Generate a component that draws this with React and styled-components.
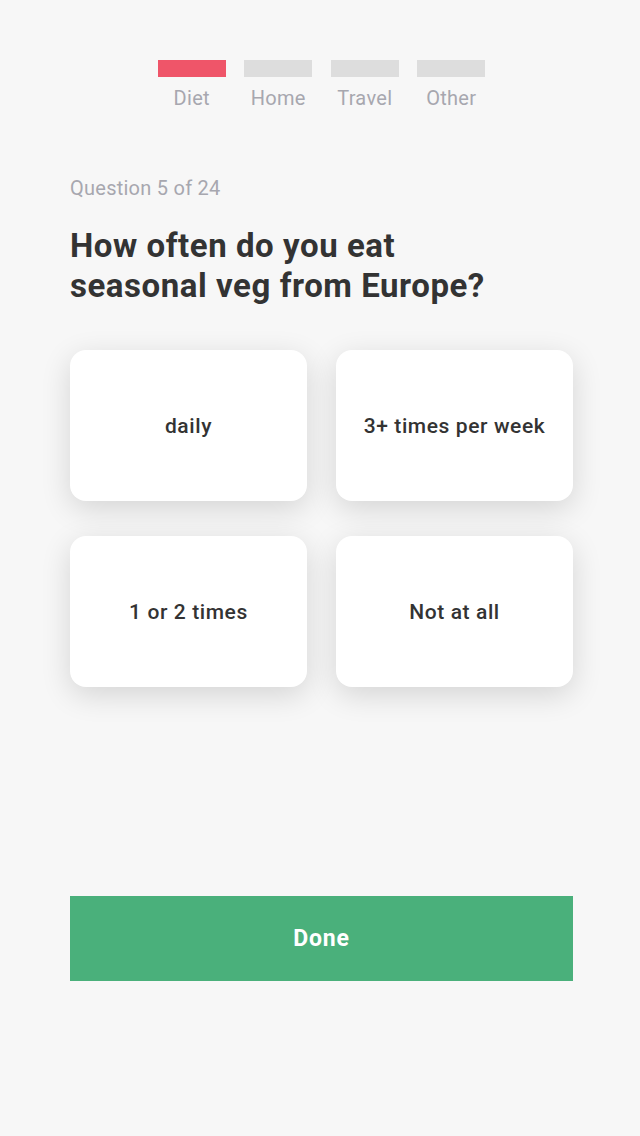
import React from 'react'
import styled, { createGlobalStyle } from 'styled-components'

const GlobalStyle = createGlobalStyle`
  html, body {
    margin: 0;
    padding: 0;
    background: #f7f7f7;
  }
  body {
    font-family: Roboto, "Noto Sans", Arial, sans-serif;
  }
`

const Page = styled.div`
  min-height: 1136px;
  box-sizing: border-box;
  padding: 60px 67px 0 70px;
  background: #f7f7f7;
`

const Steps = styled.div`
  display: flex;
  justify-content: center;
  gap: 18.5px;
`

const Step = styled.div`
  width: 68px;
  display: flex;
  flex-direction: column;
  align-items: center;
`

const StepBar = styled.div`
  width: 100%;
  height: 17px;
  background: ${p => (p.active ? '#ef5569' : '#dddddd')};
`

const StepLabel = styled.span`
  margin-top: 9px;
  font-size: 20px;
  line-height: 24px;
  letter-spacing: 0.3px;
  color: #a7a7af;
  white-space: nowrap;
`

const Counter = styled.div`
  margin-top: 66px;
  font-size: 20px;
  line-height: 24px;
  letter-spacing: 0.25px;
  color: #a7a7af;
`

const Question = styled.h1`
  margin: 26px 0 0;
  font-size: 33px;
  line-height: 40px;
  letter-spacing: 0.55px;
  font-weight: 700;
  color: #333333;
`

const Options = styled.div`
  margin-top: 44px;
  display: grid;
  grid-template-columns: 237px 237px;
  column-gap: 29px;
  row-gap: 35px;
`

const Option = styled.button`
  height: 151px;
  border: none;
  border-radius: 16px;
  background: #ffffff;
  box-shadow: 0 8px 30px rgba(0, 0, 0, 0.14);
  font-family: inherit;
  font-size: 21px;
  letter-spacing: 0.6px;
  font-weight: 500;
  color: #333333;
  cursor: pointer;
`

const DoneButton = styled.button`
  display: block;
  width: 503px;
  height: 85px;
  margin-top: 209px;
  border: none;
  background: #4ab07b;
  color: #ffffff;
  font-family: inherit;
  font-size: 23px;
  letter-spacing: 0.8px;
  font-weight: 700;
  cursor: pointer;
`

const steps = ['Diet', 'Home', 'Travel', 'Other']
const options = ['daily', '3+ times per week', '1 or 2 times', 'Not at all']

const App = () => (
  <Page>
    <GlobalStyle />
    <Steps>
      {steps.map((s, i) => (
        <Step key={s}>
          <StepBar active={i === 0} />
          <StepLabel>{s}</StepLabel>
        </Step>
      ))}
    </Steps>
    <Counter>Question 5 of 24</Counter>
    <Question>
      How often do you eat
      <br />
      seasonal veg from Europe?
    </Question>
    <Options>
      {options.map(o => (
        <Option key={o}>{o}</Option>
      ))}
    </Options>
    <DoneButton>Done</DoneButton>
  </Page>
)

export default App
